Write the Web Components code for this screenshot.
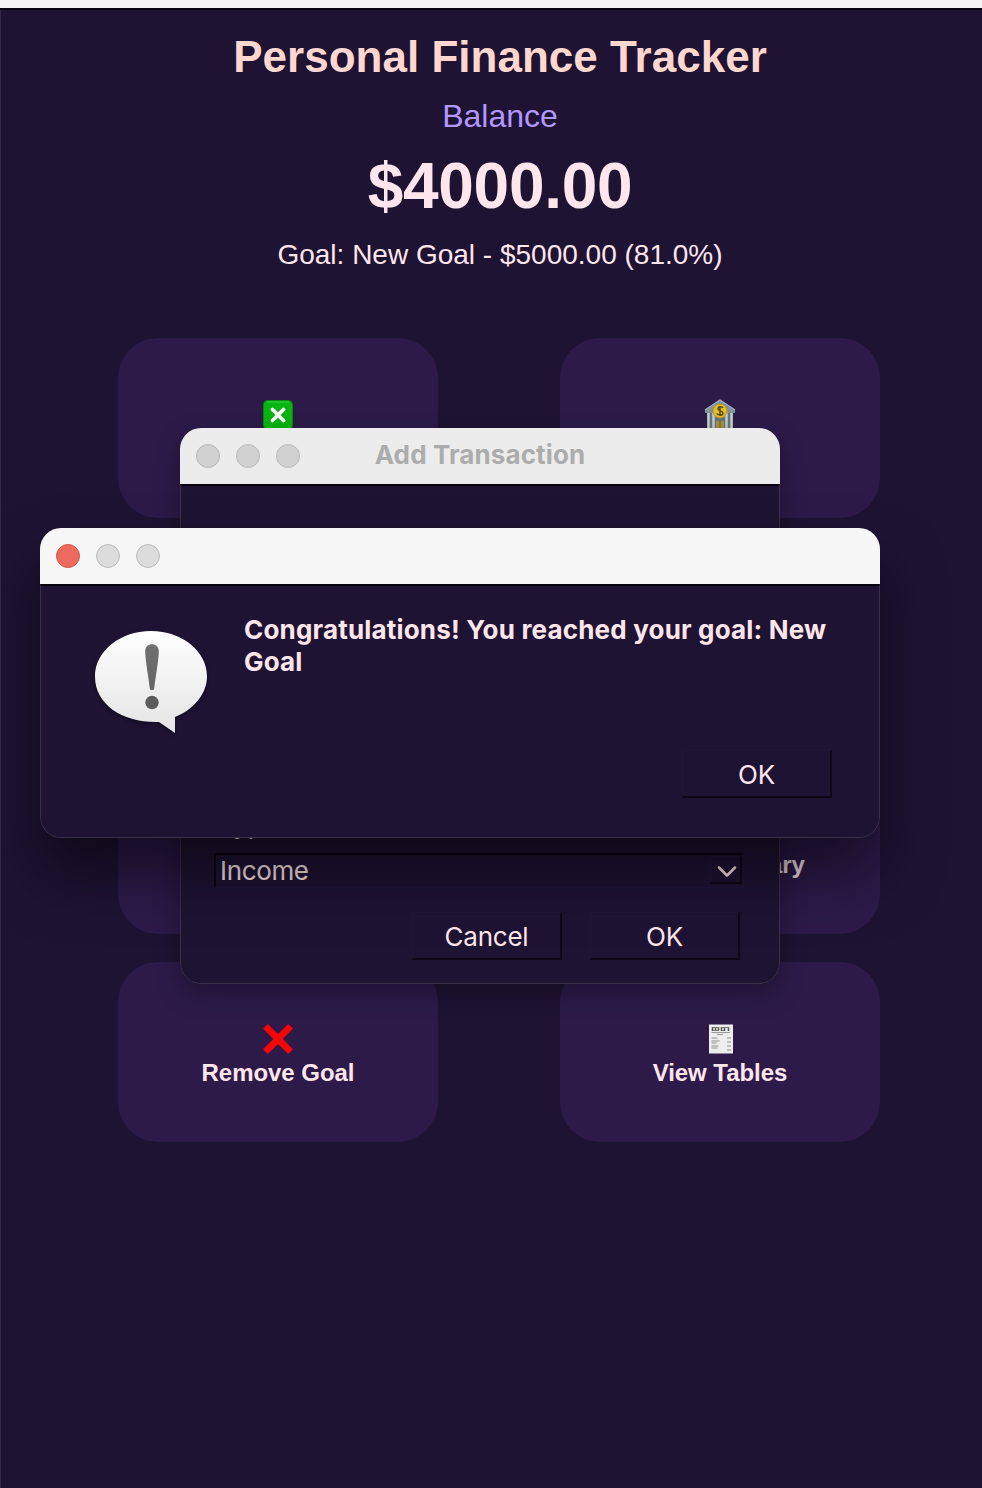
<!DOCTYPE html>
<html lang="en"><head><meta charset="utf-8"><title>Personal Finance Tracker</title>
<style>html,body{margin:0;height:1488px;overflow:hidden;background:#1e1333}</style></head>
<body>
<finance-app></finance-app>
<script>
const define = (name, html) => customElements.define(name, class extends HTMLElement {
  constructor() {
    super();
    const t = document.createElement('template');
    t.innerHTML = html;
    this.attachShadow({ mode: 'open' }).append(t.content.cloneNode(true));
  }
});

define('action-tile', `<style>
:host{display:flex;flex-direction:column;align-items:center;box-sizing:border-box;height:180px;border-radius:40px;background:#2d1a49;padding-top:60px;color:#ffe6ec;font:bold 24px/32px "Liberation Sans",Arial,sans-serif}
.icon{height:35px;width:34px}.label{white-space:nowrap;letter-spacing:-.05px}
</style><div class="icon"><slot name="icon"></slot></div><div class="label"><slot></slot></div>`);

define('push-button', `<style>
:host{display:flex;align-items:center;justify-content:center;box-sizing:border-box;width:150px;height:48px;padding-top:2px;border:solid 1px #20163a;border-right:2px solid #0d0718;border-bottom:2px solid #0d0718;color:#ffe6ec;font:26px/30px Inter,sans-serif;letter-spacing:-.25px}
</style><slot></slot>`);

define('combo-box', `<style>
:host{display:flex;align-items:center;justify-content:space-between;box-sizing:border-box;width:530px;height:35px;border:1px solid #20163a;border-top:2px solid #080312;border-left:2px solid #080312;padding:0 1px 0 4px;color:#ffe6ec;font:26px/32px Inter,sans-serif;letter-spacing:-.35px}
.arrow{display:flex;align-items:center;justify-content:center;box-sizing:border-box;width:32px;height:28px;margin:-3px 0 0;border:1px solid #20163a;border-right:2px solid #0d0718;border-bottom:2px solid #0d0718;padding:4px 0 0 2px}
svg{display:block}
</style><span><slot></slot></span><div class="arrow"><svg width="20" height="14" viewBox="0 0 20 14"><path d="M2 3.500l8 8 8-8" fill="none" stroke="#ffe6ec" stroke-width="2.500" stroke-linecap="round" stroke-linejoin="round"/></svg></div>`);

define('mac-window', `<style>
:host{display:flex;flex-direction:column;box-sizing:border-box;border-radius:21px;overflow:hidden;background:#1e1333;--bar:#f7f7f7;--dot:#dcdcdc;--first:#ed6a5e;--first-line:#d35549}
:host([inactive]){--bar:#ececec;--dot:#d1d1d1;--first:#d1d1d1;--first-line:#b4b4b4}
header{display:grid;grid-template-columns:1fr auto 1fr;align-items:center;box-sizing:border-box;height:56px;flex:none;padding:0 16px;background:var(--bar);color:#acacac;font:bold 26px/32px Inter,sans-serif}
.dots{display:flex;gap:16px}
i{box-sizing:border-box;width:24px;height:24px;border-radius:50%;background:var(--dot);border:1px solid #b9b9b9}
i:first-child{background:var(--first);border-color:var(--first-line)}
.title{padding-bottom:2px;letter-spacing:.12px}
main{flex:1;box-sizing:border-box;border:1px solid #3a3049;border-top:2px solid #07020f;border-radius:0 0 21px 21px}
</style><header><div class="dots"><i></i><i></i><i></i></div><div class="title"><slot name="title"></slot></div></header><main><slot></slot></main>`);

define('speech-alert-icon', `<style>:host{display:block;width:124px;height:112px}svg{display:block;overflow:visible;filter:drop-shadow(0 2px 2px rgba(0,0,0,.35))}</style>
<svg width="124" height="112" viewBox="0 0 124 112"><defs><linearGradient id="b" x1="0" y1="0" x2="0" y2="1"><stop stop-color="#fff"/><stop offset="1" stop-color="#e4e4e4"/></linearGradient><linearGradient id="m" x1="0" y1="0" x2="0" y2="1"><stop stop-color="#707070"/><stop offset="1" stop-color="#666"/></linearGradient></defs>
<path fill="url(#b)" d="M62 6C93 6 118 26 118 51.500C118 69 104 85 86 92V108L70 97C34 98 6 80 6 51.500C6 26 31 6 62 6Z"/>
<path fill="url(#m)" d="M56.200 26C56.200 17 69.800 17 69.800 26C69.800 35 66.500 52 65.200 63.500C65 65.700 61 65.700 60.800 63.500C59.500 52 56.200 35 56.200 26Z"/><circle cx="63" cy="77.500" r="6.700" fill="#5c5c5c"/></svg>`);

define('finance-app', `<style>
:host{display:block;position:relative;width:982px;height:1488px;overflow:hidden;color:#ffe6ec;font-family:"Liberation Sans",Arial,sans-serif}
.bar{height:8px;background:#f5f4f5;border-bottom:2px solid #090316}
.page{box-sizing:border-box;width:1000px;height:1478px;border-left:1px solid #33284a;padding:21px 0 0 0;background:#1e1333}
.heading{display:flex;flex-direction:column;align-items:center;height:307px;white-space:nowrap;width:998px}
h1{margin:0;font-size:44px;line-height:52px;color:#ffd7cf;letter-spacing:.02px}
.balance{font-size:32px;line-height:36px;color:#b197ff;margin-top:15px}
.amount{font-size:64px;line-height:74px;font-weight:bold;margin-top:15px;letter-spacing:-.3px}
.goal{font-size:28px;line-height:32px;margin-top:16px}
.grid{display:grid;grid-template-columns:320px 320px;column-gap:122px;row-gap:28px;margin-left:117px}
svg{display:block}
.add{position:absolute;left:180px;top:428px;width:600px;height:556px;box-shadow:0 10px 26px rgba(0,0,0,.3)}
.alert{position:absolute;left:40px;top:528px;width:840px;height:310px;box-shadow:0 36px 60px rgba(0,0,0,.5)}
.form{display:flex;flex-direction:column;height:497px;box-sizing:border-box;padding:323px 0 0 33px;font:26px/32px Inter,sans-serif}
.form label{padding-left:4px}.form combo-box{margin-top:12px}
.actions{display:flex;gap:28px;margin:24px 0 0 198px}
.message{display:grid;grid-template-columns:155px 600px;height:163px;padding:39px 0 0 48px;box-sizing:border-box;height:201px}
.message p{margin:-11px 0 0;font:bold 26px/32px Inter,sans-serif;letter-spacing:.18px}
.confirm{display:flex;justify-content:flex-end;padding-right:47px;margin-top:-37px}
</style>
<div class="bar"></div>
<div class="page">
<div class="heading"><h1>Personal Finance Tracker</h1><div class="balance">Balance</div><div class="amount">$4000.00</div><div class="goal">Goal: New Goal - $5000.00 (81.0%)</div></div>
<div class="grid">
<action-tile><svg slot="icon" width="34" height="34"><rect x="2" y="2" width="30" height="30" rx="5" fill="#078a07"/><rect x="3" y="3" width="28" height="28" rx="4" fill="#08b411"/><path d="M6 4h22" stroke="#3fce48"/><path d="M11.500 11.500l11 11m0-11l-11 11" stroke="#fff" stroke-width="3.800" stroke-linecap="round"/></svg></action-tile>
<action-tile><svg slot="icon" width="34" height="34"><path d="M2 12L17 2l15 10v3H2z" fill="#7d929c"/><path d="M2 12L17 2l15 10" fill="none" stroke="#a4b2b8" stroke-width="1.200"/><path d="M4 15h26v17H4z" fill="#64747d"/><path d="M5.500 15v17M10.500 15v17M23.500 15v17M28.500 15v17" stroke="#c2ced1" stroke-width="2.500"/><path d="M13 23h8v9h-8z" fill="#ac9135"/><path d="M17 23v9" stroke="#54615c"/><circle cx="17" cy="13" r="7" fill="#e5bd26" stroke="#bd971c"/><path d="M20 10c-1-2-5-1.500-5 .8 0 2.400 5 1.800 5 4.400 0 2.400-5 2.500-6 .2M17 8v10" fill="none" stroke="#594b17" stroke-width="1.500"/></svg></action-tile>
<action-tile></action-tile><action-tile></action-tile>
<action-tile></action-tile><action-tile><span slot="icon"></span>View Summary</action-tile>
<action-tile><svg slot="icon" width="34" height="34"><path d="M2 6.500l4.800-4.500 10.200 10 10.200-10 4.800 4.500-10.300 10.500 10.300 10.300-4.800 4.700-10.200-10-10.200 10-4.800-4.700 10.300-10.300z" fill="#f50505"/></svg>Remove Goal</action-tile>
<action-tile><svg slot="icon" width="34" height="34"><path d="M6 2.500h24v29H6z" fill="#ededed"/><path d="M9.500 5v4m3-4v4m3-4v4m3-4v4m3-4v4m4-4v4" stroke="#555" stroke-width="1.500"/><path d="M10 5.500h6m2 0h8M10 8.500h6m3 0h2" stroke="#777"/><path d="M8.500 10.500h18.500M14 12.500h6" stroke="#999"/><path d="M8.500 16h6M8.500 19h8M8.500 21h5M8.500 24h7M8.500 26h6M24 16h4m-4 4h4m-4 4h4m-4 4h4" stroke="#929292"/></svg>View Tables</action-tile>
</div></div>
<mac-window class="add" inactive><span slot="title">Add Transaction</span><div class="form"><label>Type:</label><combo-box>Income</combo-box><div class="actions"><push-button>Cancel</push-button><push-button>OK</push-button></div></div></mac-window>
<mac-window class="alert"><div class="message"><speech-alert-icon></speech-alert-icon><p>Congratulations! You reached your goal: New<br>Goal</p></div><div class="confirm"><push-button>OK</push-button></div></mac-window>`);
</script></body></html>
